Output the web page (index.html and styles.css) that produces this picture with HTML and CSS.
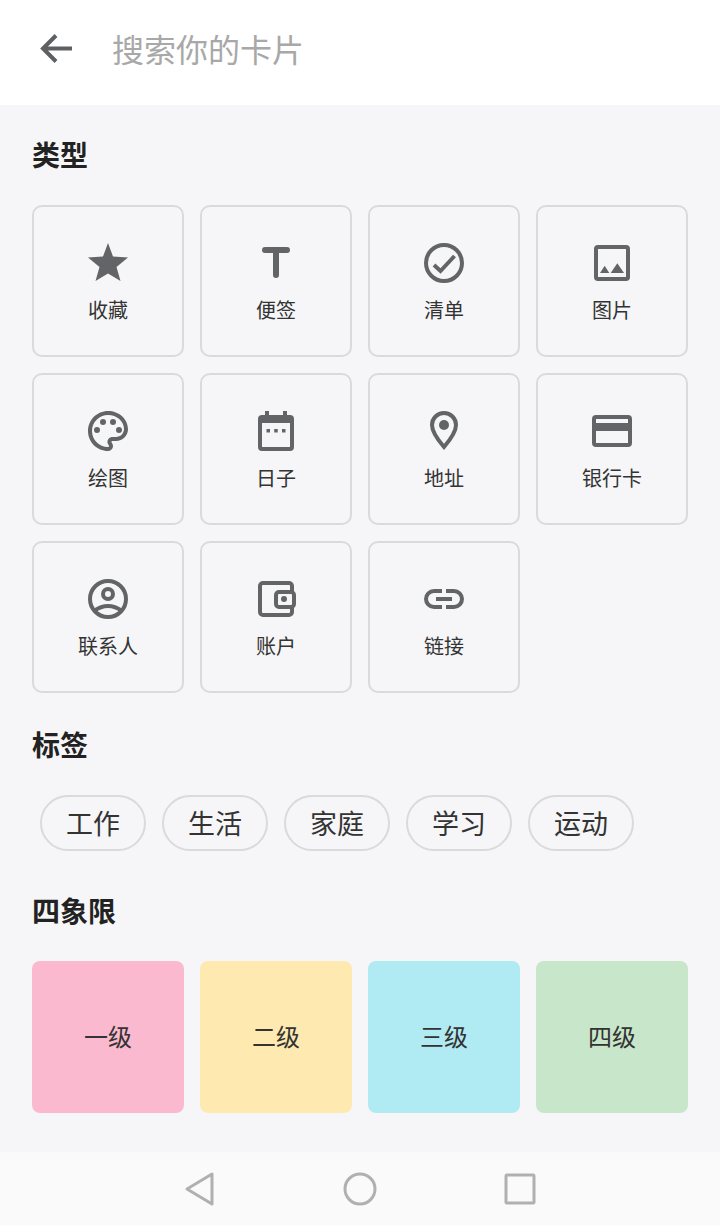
FILE: index.html
```html
<!DOCTYPE html>
<html lang="zh-CN">
<head>
    <meta charset="UTF-8">
    <meta name="viewport" content="width=device-width, initial-scale=1.0">
    <title>搜索你的卡片</title>
    <link rel="stylesheet" href="styles.css">
</head>
<body>
    <header class="search-bar">
        <svg class="back-icon" viewBox="0 0 40 40">
            <path d="M7 19.5H36M20 6.5L7 19.5L20 32.5"/>
        </svg>
        <div class="search-hint">搜索你的卡片</div>
    </header>

    <main class="content">
        <h2 class="section-title">类型</h2>
        <div class="card-grid">
            <div class="type-card">
                <svg class="type-icon" viewBox="0 0 40 40">
                    <polygon class="solid" points="20,0 25,13.5 40,14.5 28.5,24 32.5,38 20,30.5 7.5,38 11.5,24 0,14.5 15,13.5"/>
                </svg>
                <span class="type-label">收藏</span>
            </div>
            <div class="type-card">
                <svg class="type-icon" viewBox="0 0 40 40">
                    <path class="round" d="M9 7H31M20 7V32"/>
                </svg>
                <span class="type-label">便签</span>
            </div>
            <div class="type-card">
                <svg class="type-icon" viewBox="0 0 40 40">
                    <circle cx="20" cy="20" r="18"/>
                    <path d="M10 22L16.5 28L30.5 13"/>
                </svg>
                <span class="type-label">清单</span>
            </div>
            <div class="type-card">
                <svg class="type-icon" viewBox="0 0 40 40">
                    <rect x="4" y="4" width="32" height="32" rx="2"/>
                    <polygon class="solid" points="8,30 12.7,22.7 17.3,30"/>
                    <polygon class="solid" points="18.7,30 25.3,20.3 32,30"/>
                </svg>
                <span class="type-label">图片</span>
            </div>

            <div class="type-card">
                <svg class="type-icon" viewBox="2 2 20 20">
                    <path class="solid" d="M12 22C6.49 22 2 17.51 2 12S6.49 2 12 2s10 4.04 10 9c0 3.31-2.69 6-6 6h-1.77c-.28 0-.5.22-.5.5 0 .12.05.23.13.33.41.47.64 1.06.64 1.67 0 1.38-1.12 2.5-2.5 2.5zm0-18c-4.41 0-8 3.59-8 8s3.59 8 8 8c.28 0 .5-.22.5-.5 0-.16-.08-.28-.14-.35-.41-.46-.63-1.05-.63-1.65 0-1.38 1.12-2.5 2.5-2.5H16c2.21 0 4-1.79 4-4 0-3.86-3.59-7-8-7z"/>
                    <circle class="solid" cx="6.5" cy="11.5" r="1.5"/>
                    <circle class="solid" cx="9.5" cy="7.5" r="1.5"/>
                    <circle class="solid" cx="14.5" cy="7.5" r="1.5"/>
                    <circle class="solid" cx="17.5" cy="11.5" r="1.5"/>
                </svg>
                <span class="type-label">绘图</span>
            </div>
            <div class="type-card">
                <svg class="type-icon" viewBox="0 0 40 40">
                    <rect x="4" y="6" width="32" height="32" rx="2"/>
                    <rect class="solid" x="4" y="6" width="32" height="6"/>
                    <rect class="solid" x="9" y="0" width="4" height="6"/>
                    <rect class="solid" x="27" y="0" width="4" height="6"/>
                    <rect class="solid" x="10.5" y="18" width="3.5" height="3.5"/>
                    <rect class="solid" x="18.2" y="18" width="3.5" height="3.5"/>
                    <rect class="solid" x="26" y="18" width="3.5" height="3.5"/>
                </svg>
                <span class="type-label">日子</span>
            </div>
            <div class="type-card">
                <svg class="type-icon" viewBox="0 0 40 40">
                    <path d="M20 36C14 29 8 21 8 14A12 12 0 0 1 32 14C32 21 26 29 20 36Z"/>
                    <circle class="solid" cx="20" cy="14" r="5"/>
                </svg>
                <span class="type-label">地址</span>
            </div>
            <div class="type-card">
                <svg class="type-icon" viewBox="0 0 40 40">
                    <rect x="2" y="6" width="36" height="28" rx="2"/>
                    <rect class="solid" x="2" y="12" width="36" height="8"/>
                </svg>
                <span class="type-label">银行卡</span>
            </div>

            <div class="type-card">
                <svg class="type-icon" viewBox="0 0 40 40">
                    <circle cx="20" cy="20" r="18"/>
                    <circle cx="20" cy="15" r="5"/>
                    <path d="M6 32Q20 22 34 32"/>
                </svg>
                <span class="type-label">联系人</span>
            </div>
            <div class="type-card">
                <svg class="type-icon" viewBox="0 0 40 40">
                    <rect x="4" y="4" width="32" height="32" rx="3"/>
                    <rect class="pocket" x="20" y="13" width="18" height="15" rx="3"/>
                    <circle class="solid" cx="28" cy="20" r="3"/>
                </svg>
                <span class="type-label">账户</span>
            </div>
            <div class="type-card">
                <svg class="type-icon" viewBox="0 0 40 40">
                    <path d="M18 12H10A8 8 0 0 0 10 28H18M22 12H30A8 8 0 0 1 30 28H22M12 20H28"/>
                </svg>
                <span class="type-label">链接</span>
            </div>
        </div>

        <h2 class="section-title tags-title">标签</h2>
        <div class="chips">
            <span class="chip">工作</span>
            <span class="chip">生活</span>
            <span class="chip">家庭</span>
            <span class="chip">学习</span>
            <span class="chip">运动</span>
        </div>

        <h2 class="section-title levels-title">四象限</h2>
        <div class="card-grid">
            <div class="level-card level-one">一级</div>
            <div class="level-card level-two">二级</div>
            <div class="level-card level-three">三级</div>
            <div class="level-card level-four">四级</div>
        </div>
    </main>

    <nav class="nav-bar">
        <svg class="nav-icon" viewBox="0 0 36 36">
            <path d="M30 3V33L5 18Z"/>
        </svg>
        <svg class="nav-icon" viewBox="0 0 36 36">
            <circle cx="18" cy="18" r="15"/>
        </svg>
        <svg class="nav-icon" viewBox="0 0 36 36">
            <rect x="4" y="4" width="28" height="28" rx="1"/>
        </svg>
    </nav>
</body>
</html>
```

FILE: styles.css
```css
* {
    margin: 0;
    padding: 0;
    box-sizing: border-box;
}

body {
    font-family: "Noto Sans CJK SC", "Noto Sans", sans-serif;
    background: #f6f6f8;
    color: #222;
    display: flex;
    flex-direction: column;
    height: 100vh;
    overflow: hidden;
}

.search-bar {
    display: flex;
    align-items: center;
    height: 105px;
    padding: 0 0 7px 36px;
    background: white;
}

.back-icon {
    width: 40px;
    height: 40px;
    fill: none;
    stroke: #5f6063;
    stroke-width: 4;
}

.search-hint {
    margin-left: 36px;
    padding-bottom: 2px;
    font-size: 32px;
    line-height: 44px;
    color: #a8a8a8;
}

.content {
    flex: 1;
    padding: 33px 32px 0;
}

.section-title {
    font-size: 28px;
    font-weight: bold;
    line-height: 32px;
    margin-bottom: 35px;
}

.tags-title {
    margin-top: 35px;
}

.levels-title {
    margin-top: 43px;
}

.card-grid {
    display: grid;
    grid-template-columns: repeat(4, 152px);
    grid-auto-rows: 152px;
    gap: 16px;
}

.type-card {
    display: flex;
    flex-direction: column;
    align-items: center;
    padding-top: 36px;
    border: 2px solid #dadada;
    border-radius: 10px;
}

.type-icon {
    width: 40px;
    height: 40px;
    fill: none;
    stroke: #636467;
    stroke-width: 4;
}

.type-icon .solid {
    fill: #636467;
    stroke: none;
}

.type-icon .round {
    stroke-width: 6;
    stroke-linecap: round;
}

.type-icon .pocket {
    fill: #f6f6f8;
}

.type-label {
    margin-top: 15px;
    font-size: 20px;
    line-height: 24px;
    color: #333;
}

.chips {
    display: flex;
    gap: 16px;
    padding-left: 8px;
}

.chip {
    display: flex;
    align-items: center;
    justify-content: center;
    width: 106px;
    height: 56px;
    padding-bottom: 2px;
    border: 2px solid #dadada;
    border-radius: 28px;
    font-size: 27px;
    color: #333;
}

.level-card {
    display: flex;
    align-items: center;
    justify-content: center;
    padding-bottom: 3px;
    border-radius: 8px;
    font-size: 24px;
    color: #333;
}

.level-one { background: #fbb9cf; }
.level-two { background: #feeab0; }
.level-three { background: #b0ebf3; }
.level-four { background: #c8e6ca; }

.nav-bar {
    display: flex;
    align-items: center;
    justify-content: center;
    gap: 124px;
    height: 73px;
    background: #fafafb;
}

.nav-icon {
    width: 36px;
    height: 36px;
    fill: none;
    stroke: #b0b0b2;
    stroke-width: 3;
    stroke-linejoin: round;
}
```
